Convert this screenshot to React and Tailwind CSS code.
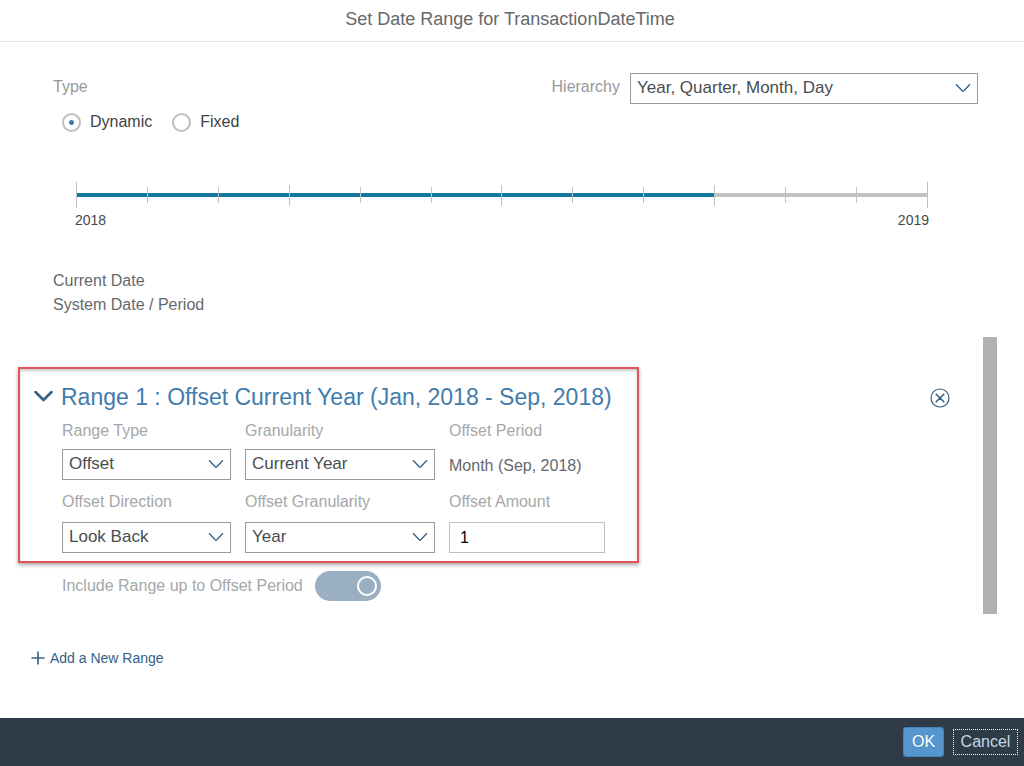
import { useState } from 'react';

const MONTHS = Array.from({ length: 13 }, (_, i) => i);

function tickHeight(month) {
  if (month === 0 || month === 12) return 'h-[26px]';
  if (month % 3 === 0) return 'h-[21px]';
  return 'h-4';
}

function SelectBox({ id, options }) {
  return (
    <div className="relative">
      <select
        id={id}
        className="block w-full h-[31px] pl-1.5 pr-8 pb-px appearance-none rounded-none border border-[#9a9a9a] bg-white text-[17px] leading-6 text-[#4a4d50]"
      >
        {options.map((option) => (
          <option key={option}>{option}</option>
        ))}
      </select>
      <svg
        className="absolute right-[7px] top-[11px] w-4 h-2 pointer-events-none"
        viewBox="0 0 16 8"
        fill="none"
        stroke="#346187"
        strokeWidth="1.3"
      >
        <path d="M1 0.2L7.2 6.8Q8 7.6 8.8 6.8L15 0.2" />
      </svg>
    </div>
  );
}

function TypeRadio({ label, checked, onChange }) {
  return (
    <label className="flex items-center gap-[9px]">
      <input
        type="radio"
        name="type"
        checked={checked}
        onChange={onChange}
        className="appearance-none w-[19px] h-[19px] rounded-full border-2 border-[#bfbfbf] bg-white checked:bg-[radial-gradient(circle,#427cac_2px,white_3px)]"
      />
      {label}
    </label>
  );
}

function Timeline() {
  return (
    <div className="ml-[76px] mr-24 mt-12">
      <div className="relative h-[26px] flex items-center">
        <div className="w-full h-1 bg-[#bfc1c3]">
          <div className="w-3/4 h-full bg-[#137a9f]" />
        </div>
        {/* Month ticks, taller at each quarter */}
        <div className="absolute inset-0 flex items-center justify-between">
          {MONTHS.map((month) => (
            <span key={month} className={`w-px bg-[#bfc1c3] ${tickHeight(month)}`} />
          ))}
        </div>
      </div>
      <div className="-mx-px mt-0.5 flex justify-between text-sm leading-5 text-[#46494c]">
        <span>2018</span>
        <span>2019</span>
      </div>
    </div>
  );
}

function App() {
  const [type, setType] = useState('Dynamic');
  const [includeRange, setIncludeRange] = useState(true);
  const [amount, setAmount] = useState('1');

  return (
    <div className="min-h-screen flex flex-col bg-white font-['Liberation_Sans',sans-serif] text-base leading-6 text-[#66696b]">
      <header className="h-[42px] pb-1 pr-1 flex items-center justify-center border-b border-[#e5e5e5]">
        <h1 className="text-lg leading-6">Set Date Range for TransactionDateTime</h1>
      </header>

      <main className="flex-1">
        {/* Type and hierarchy */}
        <div className="pt-[31px] pl-[53px] pr-[46px] flex justify-between items-start">
          <fieldset className="pt-0.5">
            <legend className="float-left text-[#97999b]">Type</legend>
            <div className="clear-both pt-[11px] pl-[9px] flex gap-5 text-[#404346]">
              <TypeRadio
                label="Dynamic"
                checked={type === 'Dynamic'}
                onChange={() => setType('Dynamic')}
              />
              <TypeRadio
                label="Fixed"
                checked={type === 'Fixed'}
                onChange={() => setType('Fixed')}
              />
            </div>
          </fieldset>
          <div className="flex items-start gap-2.5">
            <label htmlFor="hierarchy" className="pt-0.5 text-[#97999b]">
              Hierarchy
            </label>
            <div className="w-[348px]">
              <SelectBox id="hierarchy" options={['Year, Quarter, Month, Day']} />
            </div>
          </div>
        </div>

        <Timeline />

        <div className="mt-[39px] pl-[53px]">
          <p>Current Date</p>
          <p>System Date / Period</p>
        </div>

        {/* Ranges */}
        <div className="mt-5 pl-[18px] pr-[27px] flex">
          <div className="flex-1 pt-[30px] pb-[13px]">
            <div className="flex items-start justify-between">
              <section className="border-2 border-[#e05555] shadow-[0_2px_4px_rgba(0,0,0,0.35),inset_0_2px_3px_rgba(0,0,0,0.2)] pt-3.5 pb-2 pl-3.5 pr-[25px]">
                <h2 className="text-[23px] leading-7 text-[#427cac]">
                  <button type="button" className="flex items-center gap-[7px]">
                    <svg
                      className="w-5 h-3"
                      viewBox="0 0 20 12"
                      fill="none"
                      stroke="#346187"
                      strokeWidth="2.6"
                      strokeLinecap="round"
                      strokeLinejoin="round"
                    >
                      <path d="M1.5 1L9.5 9L17.5 1" />
                    </svg>
                    Range 1 : Offset Current Year (Jan, 2018 - Sep, 2018)
                  </button>
                </h2>
                <div className="pl-7">
                  <div className="mt-2 grid grid-cols-[169px_190px_156px] gap-x-3.5 gap-y-1.5">
                    <label htmlFor="range-type" className="text-[#a5a7a9]">
                      Range Type
                    </label>
                    <label htmlFor="granularity" className="text-[#a5a7a9]">
                      Granularity
                    </label>
                    <span className="text-[#a5a7a9]">Offset Period</span>
                    <SelectBox id="range-type" options={['Offset', 'Fixed']} />
                    <SelectBox id="granularity" options={['Current Year', 'Current Month']} />
                    <span className="pt-[5px]">Month (Sep, 2018)</span>
                  </div>
                  <div className="mt-2.5 grid grid-cols-[169px_190px_156px] gap-x-3.5 gap-y-2">
                    <label htmlFor="direction" className="text-[#a5a7a9]">
                      Offset Direction
                    </label>
                    <label htmlFor="offset-granularity" className="text-[#a5a7a9]">
                      Offset Granularity
                    </label>
                    <label htmlFor="amount" className="text-[#a5a7a9]">
                      Offset Amount
                    </label>
                    <SelectBox id="direction" options={['Look Back', 'Look Ahead']} />
                    <SelectBox id="offset-granularity" options={['Year', 'Month']} />
                    <input
                      id="amount"
                      type="text"
                      value={amount}
                      onChange={(e) => setAmount(e.target.value)}
                      className="w-full h-[31px] px-2.5 border border-[#bfbfbf] text-black"
                    />
                  </div>
                </div>
              </section>
              <button type="button" aria-label="Remove range" className="mt-[21px] mr-[33px]">
                <svg
                  className="w-5 h-5"
                  viewBox="0 0 20 20"
                  fill="none"
                  stroke="#346187"
                  strokeLinecap="round"
                >
                  <circle cx="10" cy="10" r="9" strokeWidth="1.2" />
                  <path d="M6.2 6.2L13.8 13.8M13.8 6.2L6.2 13.8" strokeWidth="1.6" />
                </svg>
              </button>
            </div>

            <label className="mt-2 pl-11 flex items-center gap-3 text-[#a5a7a9]">
              Include Range up to Offset Period
              <span className="relative">
                <input
                  type="checkbox"
                  role="switch"
                  checked={includeRange}
                  onChange={(e) => setIncludeRange(e.target.checked)}
                  className="peer block appearance-none w-[66px] h-[30px] rounded-full bg-[#9bafc3]"
                />
                <span className="absolute top-[5px] left-1 w-5 h-5 rounded-full border-2 border-white pointer-events-none peer-checked:left-[42px]" />
              </span>
            </label>
          </div>
          <div className="w-3.5 bg-[#b1b1b1]" />
        </div>

        <button
          type="button"
          className="mt-[34px] mb-8 ml-[31px] flex items-center gap-[5px] text-sm leading-5 text-[#346187]"
        >
          <svg className="w-3.5 h-3.5" viewBox="0 0 14 14" stroke="currentColor" strokeWidth="1.6">
            <path d="M7 0.5V13.5M0.5 7H13.5" />
          </svg>
          Add a New Range
        </button>
      </main>

      <footer className="h-12 pr-1.5 flex items-center justify-end gap-[9px] bg-[#2f3c48]">
        <button
          type="button"
          className="h-[30px] w-[41px] rounded-[3px] border border-[#4183bb] bg-[#5496cd] text-white text-shadow-2xs"
        >
          OK
        </button>
        <button
          type="button"
          className="h-[26px] w-[65px] flex items-center justify-center border border-dotted border-white text-[#c3d8ea]"
        >
          Cancel
        </button>
      </footer>
    </div>
  );
}

export default App;
